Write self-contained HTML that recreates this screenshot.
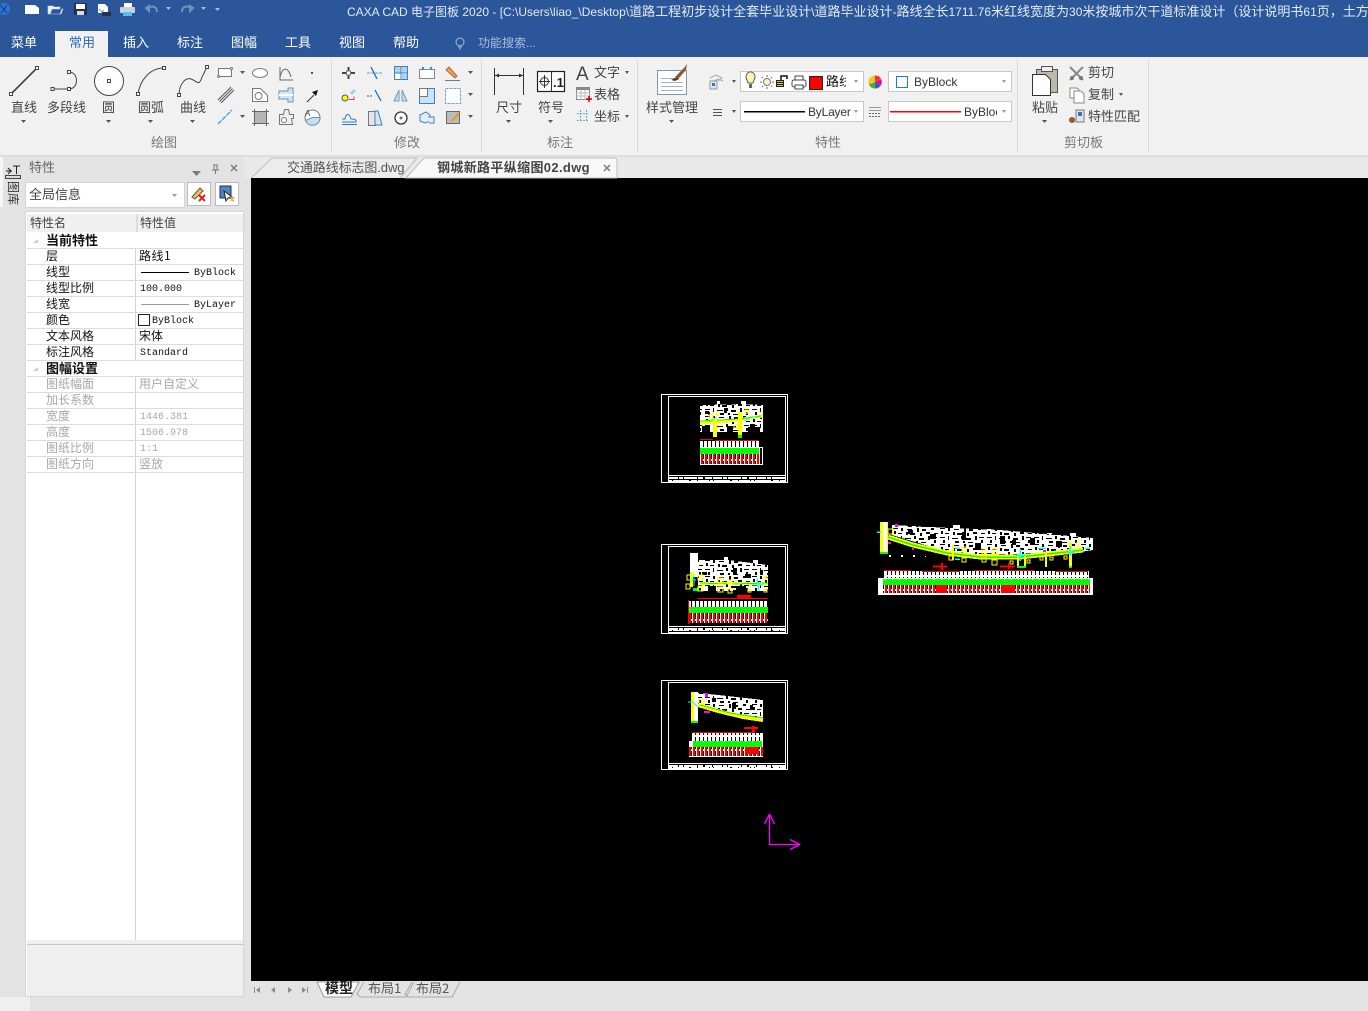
<!DOCTYPE html>
<html><head><meta charset="utf-8"><style>
html,body{margin:0;padding:0;width:1368px;height:1011px;overflow:hidden;background:#e3e3e3}
.a,.t,.g,.v{position:absolute;white-space:nowrap}
.t{font:13px/16px "Liberation Sans","Noto Sans CJK SC",sans-serif;color:#444}
.tab{color:#fff;top:35px}
.gl{color:#777;top:135px}
.g{font:12px/16px "WenQuanYi Zen Hei","Noto Sans CJK SC",sans-serif;color:#111}
.v{font:10px/16px "Liberation Mono","WenQuanYi Zen Hei",monospace;color:#111}
.d{color:#a8a8a8}
.ln{position:absolute;left:27px;width:216px;height:1px;background:#dcdcdc}
svg{position:absolute;left:0;top:0}
i{font-style:normal;font-size:13px}
</style></head><body>
<div class="a" style="left:0;top:0;width:1368px;height:57px;background:#2b579a"></div>
<div class="a" style="left:0;top:57px;width:1368px;height:98px;background:#f1f1f1"></div>
<div class="a" style="left:0;top:155px;width:1368px;height:2px;background:#dedede"></div>
<div class="a" style="left:55px;top:31px;width:53px;height:26px;background:#f1f1f1"></div>
<div class="a" style="left:331px;top:60px;width:1px;height:92px;background:#d8d8d8"></div>
<div class="a" style="left:481px;top:60px;width:1px;height:92px;background:#d8d8d8"></div>
<div class="a" style="left:637px;top:60px;width:1px;height:92px;background:#d8d8d8"></div>
<div class="a" style="left:1017px;top:60px;width:1px;height:92px;background:#d8d8d8"></div>
<div class="a" style="left:1148px;top:60px;width:1px;height:92px;background:#d8d8d8"></div>

<div class="a" style="left:347px;top:3px;width:1021px;overflow:hidden;font:12px/17px 'Liberation Sans','Noto Sans CJK SC',sans-serif;color:#e4eaf4">CAXA CAD 电子图板 2020 - [C:\Users\liao_\Desktop\<i>道路工程初步设计全套毕业设计</i>\<i>道路毕业设计</i>-<i>路线全长</i>1711.76<i>米红线宽度为</i>30<i>米按城市次干道标准设计（设计说明书</i>61<i>页，土方计算表</i></div>

<div class="t tab" style="left:11px">菜单</div>
<div class="t tab" style="left:69px;color:#2b6cb5">常用</div>
<div class="t tab" style="left:123px">插入</div>
<div class="t tab" style="left:177px">标注</div>
<div class="t tab" style="left:231px">图幅</div>
<div class="t tab" style="left:285px">工具</div>
<div class="t tab" style="left:339px">视图</div>
<div class="t tab" style="left:393px">帮助</div>
<div class="t tab" style="left:478px;font-size:12px;color:#a9bbd8">功能搜索...</div>

<div class="t" style="left:11px;top:100px">直线</div>
<div class="t" style="left:47px;top:100px">多段线</div>
<div class="t" style="left:102px;top:100px">圆</div>
<div class="t" style="left:138px;top:100px">圆弧</div>
<div class="t" style="left:180px;top:100px">曲线</div>
<div class="t" style="left:496px;top:100px">尺寸</div>
<div class="t" style="left:538px;top:100px">符号</div>
<div class="t" style="left:594px;top:65px">文字</div>
<div class="t" style="left:594px;top:87px">表格</div>
<div class="t" style="left:594px;top:109px">坐标</div>
<div class="t" style="left:646px;top:100px">样式管理</div>
<div class="t" style="left:1032px;top:100px">粘贴</div>
<div class="t" style="left:1088px;top:65px">剪切</div>
<div class="t" style="left:1088px;top:87px">复制</div>
<div class="t" style="left:1088px;top:109px">特性匹配</div>
<div class="t gl" style="left:151px">绘图</div>
<div class="t gl" style="left:394px">修改</div>
<div class="t gl" style="left:547px">标注</div>
<div class="t gl" style="left:815px">特性</div>
<div class="t gl" style="left:1064px">剪切板</div>

<div class="a" style="left:740px;top:71px;width:122px;height:19px;background:#fff;border:1px solid #c8c8c8"></div>
<div class="a" style="left:888px;top:71px;width:122px;height:19px;background:#fff;border:1px solid #c8c8c8"></div>
<div class="a" style="left:740px;top:101px;width:122px;height:19px;background:#fff;border:1px solid #c8c8c8"></div>
<div class="a" style="left:888px;top:101px;width:122px;height:19px;background:#fff;border:1px solid #c8c8c8"></div>
<div class="t" style="left:826px;top:74px;width:20px;overflow:hidden;color:#111">路线</div>
<div class="t" style="left:914px;top:74px;font-size:12px;color:#333">ByBlock</div>
<div class="t" style="left:808px;top:104px;font-size:12px;color:#333;letter-spacing:-.2px">ByLayer</div>
<div class="t" style="left:964px;top:104px;font-size:12px;color:#333;width:33px;overflow:hidden">ByBlock</div>

<!-- document tabs -->
<div class="a" style="left:244px;top:157px;width:1124px;height:21px;background:#e9e9e9"></div>
<div class="a" style="left:251px;top:178px;width:1117px;height:803px;background:#000"></div>
<div class="t" style="left:287px;top:160px;color:#555;z-index:3;letter-spacing:-.1px">交通路线标志图.dwg</div>
<div class="t" style="left:437px;top:160px;font-weight:bold;color:#444;z-index:3;letter-spacing:.35px">钢城新路平纵缩图02.dwg</div>

<!-- left strip + panel -->
<div class="a" style="left:0;top:157px;width:3px;height:50px;background:#f6f6f6"></div>
<div class="a" style="left:6px;top:181px;font:12px/13px 'WenQuanYi Zen Hei',sans-serif;color:#333;writing-mode:vertical-rl;text-orientation:sideways">图库</div>
<div class="t" style="left:29px;top:160px;color:#666">特性</div>
<div class="a" style="left:25px;top:182px;width:158px;height:24px;background:#fff;border:1px solid #d4d4d4"></div>
<div class="t" style="left:29px;top:187px;color:#444">全局信息</div>
<div class="a" style="left:187px;top:182px;width:22px;height:22px;background:#fff;border:1px solid #bbb"></div>
<div class="a" style="left:215px;top:182px;width:22px;height:22px;background:#fff;border:1px solid #bbb"></div>

<div class="a" style="left:25px;top:211px;width:219px;height:786px;background:#fff;box-sizing:border-box;border:1px solid #d6d6d6"></div>
<div class="a" style="left:27px;top:214px;width:216px;height:18px;background:#f0f0f0"></div>
<div class="a" style="left:136px;top:214px;width:2px;height:18px;background:#dcdcdc"></div>
<div class="a" style="left:135px;top:232px;width:1px;height:708px;background:#d2d2d2"></div>
<div class="a" style="left:27px;top:232px;width:216px;height:17px;background:#fff"></div>
<div class="a" style="left:27px;top:360px;width:216px;height:16px;background:#fff"></div>
<div class="a" style="left:27px;top:940px;width:216px;height:56px;background:#efefef;border-top:0"></div>
<div class="a" style="left:27px;top:944px;width:216px;height:1px;background:#c6c6c6"></div>
<div class="ln" style="top:248px"></div><div class="ln" style="top:264px"></div><div class="ln" style="top:280px"></div><div class="ln" style="top:296px"></div><div class="ln" style="top:312px"></div><div class="ln" style="top:328px"></div><div class="ln" style="top:344px"></div><div class="ln" style="top:360px"></div><div class="ln" style="top:376px"></div><div class="ln" style="top:392px"></div><div class="ln" style="top:408px"></div><div class="ln" style="top:424px"></div><div class="ln" style="top:440px"></div><div class="ln" style="top:456px"></div><div class="ln" style="top:472px"></div>

<div class="g" style="left:30px;top:215px;color:#444">特性名</div>
<div class="g" style="left:140px;top:215px;color:#444">特性值</div>
<div class="g" style="left:46px;top:232px;font-size:13px;font-weight:bold">当前特性</div>
<div class="g" style="left:46px;top:360px;font-size:13px;font-weight:bold">图幅设置</div>
<div class="g" style="left:46px;top:248px">层</div><div class="g" style="left:139px;top:248px;letter-spacing:.5px">路线1</div>
<div class="g" style="left:46px;top:264px">线型</div><div class="v" style="left:194px;top:266px">ByBlock</div>
<div class="g" style="left:46px;top:280px">线型比例</div><div class="v" style="left:140px;top:282px">100.000</div>
<div class="g" style="left:46px;top:296px">线宽</div><div class="v" style="left:194px;top:298px">ByLayer</div>
<div class="g" style="left:46px;top:312px">颜色</div><div class="v" style="left:152px;top:314px">ByBlock</div>
<div class="g" style="left:46px;top:328px">文本风格</div><div class="g" style="left:139px;top:328px">宋体</div>
<div class="g" style="left:46px;top:344px">标注风格</div><div class="v" style="left:140px;top:346px">Standard</div>
<div class="g d" style="left:46px;top:376px">图纸幅面</div><div class="g d" style="left:139px;top:376px">用户自定义</div>
<div class="g d" style="left:46px;top:392px">加长系数</div>
<div class="g d" style="left:46px;top:408px">宽度</div><div class="v d" style="left:140px;top:410px">1446.381</div>
<div class="g d" style="left:46px;top:424px">高度</div><div class="v d" style="left:140px;top:426px">1506.978</div>
<div class="g d" style="left:46px;top:440px">图纸比例</div><div class="v d" style="left:140px;top:442px">1:1</div>
<div class="g d" style="left:46px;top:456px">图纸方向</div><div class="g d" style="left:139px;top:456px">竖放</div>

<!-- bottom -->
<div class="a" style="left:0;top:997px;width:30px;height:14px;background:#efefef"></div>
<div class="g" style="left:325px;top:980px;font-size:14px;font-weight:bold;z-index:3;color:#222">模型</div>
<div class="g" style="left:368px;top:980px;font-size:13px;z-index:3;color:#555">布局1</div>
<div class="g" style="left:416px;top:980px;font-size:13px;z-index:3;color:#555">布局2</div>

<svg width="1368" height="1011" viewBox="0 0 1368 1011" fill="none" style="z-index:2">
<defs>
<pattern id="n" width="47" height="16" patternUnits="userSpaceOnUse">
<rect width="47" height="16" fill="#fff"/>
<g fill="#000"><rect x="0" y="0" width="5" height="1"/><rect x="8" y="0" width="2" height="3"/><rect x="14" y="1" width="5" height="1"/><rect x="24" y="0" width="2" height="4"/><rect x="29" y="1" width="4" height="2"/><rect x="38" y="0" width="3" height="2"/><rect x="1" y="3" width="2" height="3"/><rect x="5" y="5" width="4" height="1"/><rect x="13" y="4" width="2" height="3"/><rect x="17" y="5" width="5" height="2"/><rect x="27" y="5" width="2" height="3"/><rect x="33" y="4" width="4" height="2"/><rect x="41" y="5" width="4" height="1"/><rect x="0" y="9" width="5" height="1"/><rect x="8" y="8" width="1" height="4"/><rect x="12" y="10" width="6" height="1"/><rect x="21" y="8" width="2" height="3"/><rect x="26" y="10" width="5" height="2"/><rect x="35" y="8" width="2" height="4"/><rect x="39" y="9" width="5" height="1"/><rect x="3" y="12" width="2" height="3"/><rect x="15" y="13" width="4" height="2"/><rect x="23" y="13" width="2" height="2"/><rect x="28" y="14" width="5" height="1"/><rect x="41" y="12" width="2" height="3"/></g>
</pattern>
<pattern id="col" width="4" height="8" patternUnits="userSpaceOnUse"><rect width="3" height="8" fill="#fff"/><rect width="4" height="1" fill="#fff"/><rect y="7" width="4" height="1" fill="#fff"/></pattern>
<pattern id="red" width="4" height="10" patternUnits="userSpaceOnUse"><rect width="4" height="10" fill="#fff"/><rect x="1" width="2" height="10" fill="#f00"/><rect x="3" y="1" width="1" height="8" fill="#000"/></pattern>
<pattern id="grn" width="7" height="6" patternUnits="userSpaceOnUse"><rect width="7" height="6" fill="#0f0"/><rect x="3" y="3" width="1" height="1" fill="#cfc"/></pattern>
</defs>

<!-- QAT -->
<path d="M25 5h10l4 3v6H25z" fill="#fff"/>
<path d="M48 13V6h5l1 1h6v2h-8l-2 5h10l2-5h1l-2 5H48z" fill="#eee" stroke="#cfd6e2" stroke-width=".6"/>
<rect x="74" y="3" width="13" height="12" rx="1" fill="#20324d"/><rect x="76" y="4" width="9" height="5" fill="#fff"/><rect x="77" y="11" width="7" height="4" fill="#ddd"/>
<path d="M98 4h7l3 3v6H98z" fill="#fff"/><path d="M102 12h9v4h-9z" fill="#20324d"/><path d="M99 9l3 3 2-2" stroke="#5ba3e0"/>
<path d="M124 3h8v4h-8z" fill="#fff"/><rect x="120" y="7" width="15" height="6" rx="1" fill="#c9d3df"/><rect x="123" y="12" width="9" height="4" fill="#52c2e6"/>
<path d="M148 9c3-4 9-3 9 3M146 8l3-2v5z" stroke="#7290bd" stroke-width="2"/>
<path d="M191 9c-3-4-9-3-9 3M193 8l-3-2v5z" stroke="#7290bd" stroke-width="2"/>
<path d="M166 7h5l-2.500 3zM201 7h5l-2.500 3zM215 6h5M215 8h5l-2.500 3z" fill="#a9bbd8" stroke="none"/>
<circle cx="4" cy="9" r="6" fill="#2f74d0"/><path d="M0 5l7 8M7 5l-6 8" stroke="#0e3d8a"/>
<circle cx="460" cy="42" r="4" stroke="#a9bbd8"/><path d="M458 47h4M459 49h2" stroke="#a9bbd8"/>

<!-- draw big icons -->
<g stroke="#444" stroke-width="1">
<path d="M11 94L37 68" stroke-width="1.600"/><rect x="9.500" y="92.500" width="3" height="3" fill="#fff"/><rect x="35.500" y="66.500" width="3" height="3" fill="#fff"/>
<path d="M52 89h17M69 72c10 0 10 17 0 17"/><rect x="51" y="87.500" width="3" height="3" fill="#fff"/><rect x="67.500" y="87.500" width="3" height="3" fill="#fff"/><rect x="67.500" y="70.500" width="3" height="3" fill="#fff"/>
<circle cx="109" cy="81" r="14.500" fill="#fff"/><rect x="107.500" y="79.500" width="3" height="3" fill="#fff"/>
<path d="M138 94c2-14 12-26 26-26"/><rect x="136.500" y="92.500" width="3" height="3" fill="#fff"/><rect x="162.500" y="66.500" width="3" height="3" fill="#fff"/>
<path d="M179 95c0-10 6-18 12-16s8 8 11-2l5-10"/><rect x="177.500" y="93.500" width="3" height="3" fill="#fff"/><rect x="205.500" y="65.500" width="3" height="3" fill="#fff"/>
</g>
<!-- drop arrows -->
<g fill="#555"><path d="M21 120h5l-2.500 3zM106 120h5l-2.500 3zM148 120h5l-2.500 3zM190 120h5l-2.500 3zM240 71h5l-2.500 3zM240 115h5l-2.500 3zM468 71h5l-2.500 3zM468 93h5l-2.500 3zM468 115h5l-2.500 3zM506 120h5l-2.500 3zM548 120h5l-2.500 3zM625 71h4l-2 3zM625 115h4l-2 3zM1119 93h4l-2 3zM669 120h5l-2.500 3zM732 80h4l-2 3zM732 110h4l-2 3zM1042 120h5l-2.500 3z"/></g>
<g fill="#999"><path d="M854 80h4l-2 3zM1002 80h4l-2 3zM854 110h4l-2 3zM1002 110h4l-2 3zM172 194h5l-2.500 3z"/></g>

<!-- draw small icons -->
<g stroke="#777" stroke-width="1">
<rect x="218.500" y="68.500" width="13" height="8" fill="#fff"/><circle cx="218.500" cy="76.500" r="1" fill="#fff"/><circle cx="231.500" cy="68.500" r="1" fill="#fff"/>
<ellipse cx="260" cy="73" rx="7.500" ry="4.500" fill="#fff"/>
<path d="M280 67v13h13M280 77c3-11 8-10 11 0" stroke="#666"/>
<rect x="311" y="72" width="2" height="2" fill="#555" stroke="none"/>
<path d="M218 100l13-13M219.500 101.500l13-13M221 103l13-13" stroke="#555"/>
<path d="M252.500 88.500h8l7 7v6h-15z" fill="#fff"/><circle cx="258.500" cy="96" r="3.500"/>
<path d="M279 91h9v-3h5v14h-5v-3h-9z" fill="#cfe6fa" stroke="#6f8fb0"/><path d="M279 95h14" stroke="#fff" stroke-width="2"/>
<path d="M307 102l7-7" stroke="#333"/><path d="M312 92l6-2-2 6z" fill="#111" stroke="none"/>
<path d="M218 124l14-14" stroke="#3b9ee6" stroke-dasharray="5 1" stroke-width="1.300"/>
<rect x="254.500" y="111.500" width="12" height="12" fill="#b5b5b5"/><path d="M252 111.500h17M252 123.500h17M254.500 109v17M266.500 109v17" stroke="#666"/>
<path d="M279.500 114.500h4l1-5h4l1 5h4v4h-2l1 6h-13z" fill="#eee"/><circle cx="284" cy="120" r="2.500" fill="#fff"/>
<circle cx="312.500" cy="117.500" r="7.500" fill="#fff"/><path d="M312.500 117.500h7.500a7.500 7.500 0 0 1-14.500 3z" fill="#bfe2f7" stroke="#6f8fb0"/>
</g>
<text x="305" y="116" font-family="Liberation Sans" font-size="8" fill="#444">A</text>
<!-- modify icons -->
<g stroke="#4a7fb0" stroke-width="1">
<path d="M342 73h4M351 73h4M348.500 67v4M348.500 75v4" stroke="#444" stroke-width="2"/><rect x="346.500" y="71" width="4" height="4" fill="#fff" stroke="#777"/>
<path d="M367 73h16" stroke-dasharray="3 1" stroke="#5ba3e0"/><path d="M371 67l6 12" stroke="#1d6fb8" stroke-width="1.300"/>
<rect x="394.500" y="66.500" width="13" height="13" fill="#fff"/><rect x="395" y="67" width="6" height="6" fill="#a9d3f5" stroke="none"/><rect x="402" y="67" width="5" height="6" fill="#a9d3f5" stroke="none"/><rect x="402" y="74" width="5" height="5" fill="#a9d3f5" stroke="none"/><path d="M394 73h14M401 66v14"/>
<rect x="419.500" y="69.500" width="15" height="9" fill="#fff" stroke="#888"/><path d="M423 67v3M431 67v3" stroke="#3b8fdc" stroke-width="2"/>
<path d="M446 70l9 8 2-2-8-9z" fill="#f5a623" stroke="#a66"/><path d="M445 80.500h15" stroke="#777"/>
<circle cx="345" cy="98" r="3" fill="#ff0" stroke="#555"/><path d="M351 94l4-4" stroke="#bfe2f7" stroke-width="4"/><path d="M351 94l4-4" stroke="#7aa8d0" stroke-width=".6"/><path d="M349 99.500h5v-3" stroke="#c44"/>
<path d="M367 96h6" stroke-dasharray="2 1" stroke="#555"/><path d="M375 90l6 11" stroke="#1d6fb8" stroke-width="1.300"/>
<path d="M399 90v11h-5zM402 90v11h5z" fill="#bfdff5" stroke="#7a9ab5"/>
<rect x="419.500" y="88.500" width="15" height="15" fill="#c6e4fa"/><rect x="419.500" y="88.500" width="8" height="8" fill="#fff" stroke="#777"/>
<rect x="445.500" y="88.500" width="15" height="15" fill="#fff" stroke="#6fa3d0" stroke-dasharray="3 1"/>
<path d="M342 122h14c1-3-3-3-5-3-2-6-5-6-6 0h-3M342 124.500h15" stroke="#2c7cc4"/>
<path d="M368.500 111.500h7v14h-7z" fill="#e5e5e5" stroke="#777"/><path d="M375 111h3l4 14h-7z" fill="#cfe8fb"/>
<circle cx="401" cy="118" r="6" stroke="#333" stroke-width="1.300" fill="#fff"/><circle cx="401" cy="118" r="1" fill="#444"/>
<path d="M420 115l6-3 4 3v6l-5 2-5-2z" fill="#dff0fc"/><path d="M428 117h6v6h-5" fill="#dff0fc"/>
<rect x="446.500" y="111.500" width="13" height="12" fill="#bbb" stroke="#666"/><path d="M452 121l7-8" stroke="#e89a1e" stroke-width="2"/>
</g>
<!-- dim -->
<g stroke="#333">
<path d="M494.500 68v27M523.500 68v27"/><path d="M495 75.500h28"/><path d="M495 75.500l4-2v4zM523 75.500l-4-2v4z" fill="#333" stroke="none"/>
<rect x="537.500" y="71.500" width="27" height="20" fill="#fff" stroke="#222" stroke-width="1.200"/><path d="M551.500 72v19"/><circle cx="544.500" cy="81.500" r="4"/><path d="M539 81.500h11M544.500 75v13"/>
</g>
<text x="553" y="87" font-family="Liberation Sans" font-size="13" font-weight="bold" fill="#222">.1</text>
<text x="576" y="80" font-family="Liberation Sans" font-size="19" fill="#444">A</text>
<rect x="576.500" y="87.500" width="13" height="12" fill="#fff" stroke="#888"/><rect x="576" y="87" width="14" height="3" fill="#888"/><path d="M576 93h14M576 96h14M581 90v10M585 90v10" stroke="#bbb"/><path d="M586 99h6M589 96v6" stroke="#c00" stroke-width="1.500"/>
<path d="M577 113.500h12M577 120.500h12M580.500 110v12M586.500 110v12" stroke="#6fa3d0" stroke-dasharray="2 1"/>
<!-- style -->
<rect x="657.500" y="70.500" width="29" height="24" fill="#fff" stroke="#7d97b5"/><path d="M661 78.500h18M661 82.500h22M661 86.500h22M661 90.500h22" stroke="#9db4cc"/><path d="M675 77l9-9 3-4-1 6-7 8z" fill="#8b5a2b"/><path d="M671 80l6-3 2 2-4 2z" fill="#5d3a1a"/>
<path d="M710 78l6-3 6 3-4 3M712 82l6-3 5 2" stroke="#aaa"/><rect x="710" y="81" width="7" height="8" fill="#dfe6ef" stroke="#999"/><rect x="712" y="83" width="3" height="3" fill="#3b70c0"/>
<path d="M713 109.500h9M713 112.500h9M713 115.500h9" stroke="#555"/>
<!-- layer combo -->
<path d="M747 80a4.500 5 0 1 1 7 0l-1 3h-5z" fill="#fff3b0" stroke="#555"/><rect x="749" y="84" width="3" height="4" fill="#666"/>
<circle cx="767" cy="82" r="3.500" stroke="#777" fill="#fff6c5"/><path d="M767 75v2M767 87v2M760 82h2M772 82h2M762 77l1 1M771 86l1 1M772 77l-1 1M763 86l-1 1" stroke="#666"/>
<rect x="776" y="80" width="8" height="7" fill="#222"/><path d="M777 81.500h6M777 83.500h6M777 85.500h6" stroke="#d6c43a"/><path d="M781 80v-4h6v3" stroke="#111" stroke-width="1.500"/>
<rect x="792" y="80" width="14" height="7" rx="2" fill="#fff" stroke="#444"/><rect x="795" y="76" width="8" height="4" fill="#fff" stroke="#444"/><rect x="795" y="85" width="8" height="4" fill="#fff" stroke="#444"/>
<rect x="809.500" y="76.500" width="13" height="13" fill="#f00" stroke="#222"/>
<circle cx="875" cy="82" r="6.500" fill="#f3c623"/><path d="M875 82V75.500a6.500 6.500 0 0 1 6 3z" fill="#e33"/><path d="M875 82l6-3a6.500 6.500 0 0 1 0 6z" fill="#e0a"/><path d="M875 82l6 3a6.500 6.500 0 0 1-6 3.500z" fill="#45c"/><path d="M875 82v6.500a6.500 6.500 0 0 1-6-4z" fill="#3b3"/>
<rect x="896.500" y="76.500" width="11" height="11" fill="#fff" stroke="#1f7bd1"/>
<rect x="744" y="111" width="61" height="1.500" fill="#000"/>
<rect x="890" y="111" width="71" height="1.500" fill="#f00"/>
<path d="M869 107.500h12M869 110.500h12" stroke="#999"/><path d="M869 113.500h12M869 116.500h12" stroke="#666" stroke-dasharray="2 1"/>
<!-- clipboard -->
<path d="M1036.500 69.500h21v23h-21z" fill="#bdb7ac" stroke="#555"/><rect x="1041.500" y="66.500" width="11" height="5" fill="#eee" stroke="#555"/><path d="M1032.500 74.500h13l5 5v16h-18z" fill="#fff" stroke="#333"/>
<path d="M1070 67l13 13M1083 67l-13 13" stroke="#888" stroke-width="2"/><circle cx="1072" cy="78" r="2" fill="#777"/><circle cx="1081" cy="78" r="2" fill="#777"/>
<path d="M1070 88h7l2 2v8h-9z" fill="#fff" stroke="#888"/><path d="M1074 91h7l3 3v9h-10z" fill="#fff" stroke="#888"/>
<rect x="1076" y="110" width="8" height="12" fill="#dfe6ef" stroke="#777"/><rect x="1078" y="112" width="4" height="4" fill="#3b70c0"/><circle cx="1072" cy="120" r="3" fill="#8b5a2b"/>

<!-- doc tabs -->
<path d="M251 178L272 158H417L400 178" fill="#ececec" stroke="#bdbdbd"/>
<path d="M406 178L424 158H614q3 0 3 3V178z" fill="#f8f8f8" stroke="#bdbdbd"/>
<path d="M604 165l6 6M610 165l-6 6" stroke="#777" stroke-width="1.400"/>

<!-- panel icons -->
<path d="M6 171h6M8 168l3 3-3 3" stroke="#222"/><path d="M13 166h7M16.500 166v8" stroke="#222"/><rect x="5.500" y="175.500" width="15" height="3" fill="#ddd" stroke="#444"/>
<path d="M192 171h9l-4.500 5z" fill="#777"/>
<path d="M213 165h5M214 165v5h3v-5M215.500 170v4M212 170h7" stroke="#777"/>
<path d="M231 165l6 6M237 165l-6 6" stroke="#777" stroke-width="1.400"/>
<path d="M192 197l8-9 3 3-8 8z" fill="#f3c04a" stroke="#555"/><path d="M199 195l6 6M205 195l-6 6" stroke="#d22" stroke-width="2"/>
<rect x="220" y="186" width="11" height="12" fill="#4a86c8" stroke="#234"/><path d="M224 191l2 10 2-3 4-1z" fill="#fff" stroke="#222"/><path d="M230 197l4 1-3 2 3 1" stroke="#e8a01e"/>
<path d="M33 243l5-4v4z" fill="#ccc"/><path d="M33 371l5-4v4z" fill="#ccc"/>
<path d="M141 272.500h48" stroke="#000"/><path d="M141 304.500h48" stroke="#999"/><rect x="138.500" y="314.500" width="11" height="11" fill="#fff" stroke="#222"/>

<!-- bottom nav -->
<g fill="#8a8a8a"><path d="M254 987h1v6h-1zM260 987v6l-4-3zM275 987v6l-4-3zM288 987l4 3-4 3zM302 987l4 3-4 3zM307 987h1v6h-1z"/></g>
<path d="M317 982l7 15h27l8-15z" fill="#fff" stroke="#999"/>
<path d="M364 982l-7 12 3 3h46l8-15" stroke="#aaa"/>
<path d="M412 982l-7 12 3 3h44l8-15" stroke="#aaa"/>

<!-- sheets -->
<g shape-rendering="crispEdges">
<g stroke="#fff">
<rect x="661.500" y="394.500" width="126" height="88"/><rect x="668.500" y="396.500" width="117" height="85"/><path d="M668 475.500h118"/>
<rect x="661.500" y="544.500" width="126" height="89"/><rect x="668.500" y="546.500" width="117" height="86"/><path d="M668 626.500h118"/>
<rect x="661.500" y="680.500" width="126" height="89"/><rect x="668.500" y="682.500" width="117" height="86"/><path d="M668 763.500h118"/>
</g>
<g stroke="#fff" stroke-width="2" stroke-dasharray="9 1 4 1 13 1 5 2 7 1">
<path d="M669 478h116M669 629h116M669 766h116"/>
</g>
<g stroke="#fff" stroke-dasharray="3 1 16 2 6 1 11 1">
<path d="M669 480.500h116M669 630.500h116M669 767.500h116"/>
</g>

<!-- sheet 1 -->
<rect x="717" y="401" width="3" height="5" fill="#fff"/><rect x="741" y="401" width="5" height="5" fill="#fff"/>
<path d="M700 405h14l3-1 12 1 9-1 25 1v27h-63z" fill="url(#n)"/>
<g fill="#000"><rect x="705" y="411" width="4" height="3"/><rect x="724" y="408" width="3" height="5"/><rect x="750" y="424" width="5" height="3"/><rect x="727" y="426" width="6" height="6"/><rect x="702" y="426" width="8" height="6"/><rect x="748" y="427" width="12" height="5"/></g>
<path d="M700 423l30-2 33-5" stroke="#ff0" stroke-width="3"/><path d="M700 421l40-2 21-3" stroke="#0f0"/>
<rect x="713" y="418" width="4" height="19" fill="#ff0"/><rect x="738" y="412" width="4" height="26" fill="#ff0"/><rect x="738" y="435" width="4" height="3" fill="#0f0"/>
<g stroke="#ff0"><rect x="709" y="415" width="4" height="4"/><rect x="716" y="412" width="3" height="3"/><rect x="745" y="410" width="3" height="3"/><rect x="734" y="425" width="3" height="3"/></g>
<path d="M709 422l8-5M745 421l6-4M752 417h6" stroke="#0ff"/>
<rect x="700" y="441" width="59" height="7" fill="url(#col)"/><path d="M700 439.500h13M715 440.500h44" stroke="#f00"/>
<rect x="700" y="448" width="59" height="6" fill="url(#grn)"/>
<rect x="700" y="454" width="59" height="10" fill="url(#red)"/>
<path d="M759.500 447v17M759 447.500h4M762.500 447v17M700 464.500h63" stroke="#fff"/>

<!-- sheet 2 -->
<rect x="690" y="553" width="8" height="24" fill="#fff"/><rect x="724" y="557" width="4" height="26" fill="#fff"/><rect x="753" y="560" width="5" height="28" fill="#fff"/>
<path d="M698 560l26 0 4 0 40 5v26h-70z" fill="url(#n)"/>
<g fill="#000"><rect x="702" y="572" width="5" height="3"/><rect x="733" y="568" width="4" height="6"/><rect x="745" y="574" width="6" height="4"/><rect x="708" y="586" width="8" height="5"/><rect x="736" y="586" width="10" height="5"/><rect x="760" y="570" width="3" height="5"/></g>
<path d="M700 584l30-1 38 1" stroke="#ff0" stroke-width="2.500"/><path d="M700 583l34 1 34-1" stroke="#0f0"/>
<rect x="690" y="572" width="3" height="15" fill="#ff0"/><rect x="693" y="588" width="6" height="3" fill="#0f0"/>
<g stroke="#ff0" stroke-width="1.200"><rect x="687" y="575" width="4" height="5"/><rect x="698" y="575" width="5" height="5"/><rect x="686" y="584" width="4" height="5"/><rect x="698" y="586" width="5" height="5"/><rect x="718" y="578" width="5" height="5"/><rect x="718" y="587" width="5" height="5"/><rect x="728" y="580" width="4" height="4"/><rect x="728" y="589" width="4" height="4"/><rect x="748" y="589" width="3" height="3"/><rect x="764" y="576" width="3" height="3"/><rect x="764" y="589" width="3" height="3"/></g>
<path d="M752 585h11M757 578l2 13M690 580h6M694 574v12" stroke="#0ff" stroke-width="1.300"/>
<rect x="689" y="601" width="79" height="6" fill="url(#col)"/><path d="M697 598.500h71" stroke="#f00"/><rect x="737" y="595" width="14" height="3" fill="#f00"/>
<rect x="689" y="607" width="79" height="6" fill="url(#grn)"/>
<rect x="689" y="613" width="79" height="10" fill="url(#red)"/>
<path d="M688.500 600v24" stroke="#f00"/>

<!-- sheet 3 -->
<rect x="693" y="692" width="5" height="30" fill="#fff"/>
<path d="M698 693l20 2 45 5v18l-30-3-35-12z" fill="url(#n)"/>
<g fill="#000"><rect x="712" y="698" width="4" height="4"/><rect x="732" y="703" width="4" height="6"/><rect x="750" y="705" width="3" height="5"/></g>
<path d="M698 705l20 6 25 6 20 3" stroke="#ff0" stroke-width="4"/><path d="M700 705l30 8 33 5" stroke="#0f0"/>
<rect x="691" y="692" width="3" height="30" fill="#ff0"/><rect x="691" y="721" width="7" height="2" fill="#0f0"/>
<rect x="705" y="693" width="3" height="4" fill="#f0f"/><rect x="699" y="699" width="5" height="5" stroke="#ff0"/><rect x="704" y="711" width="6" height="2" fill="#f0f"/><path d="M688 702h5l5 5" stroke="#0ff"/>
<path d="M744 727h14v2h-14z" fill="#f00"/><rect x="752" y="726" width="3" height="7" fill="#f00"/>
<rect x="692" y="733" width="71" height="8" fill="url(#col)"/><path d="M693 732.500h60" stroke="#f00"/>
<rect x="689" y="741" width="74" height="6" fill="#fff"/><rect x="693" y="741" width="69" height="6" fill="url(#grn)"/>
<rect x="689" y="747" width="74" height="10" fill="url(#red)"/><rect x="747" y="747" width="10" height="7" fill="#f00"/>
<path d="M689 756.500h74" stroke="#fff"/>

<!-- big drawing -->
<rect x="953" y="525" width="7" height="28" fill="#fff"/><rect x="987" y="529" width="4" height="24" fill="#fff"/><rect x="1017" y="533" width="7" height="24" fill="#fff"/><rect x="1047" y="533" width="5" height="18" fill="#fff"/><rect x="1070" y="533" width="6" height="18" fill="#fff"/>
<path d="M892 525L950 528L1000 530L1093 538V550L1080 552L1000 555L970 555L935 548L892 535z" fill="url(#n)"/>
<g fill="#000"><rect x="908" y="530" width="5" height="4"/><rect x="930" y="534" width="6" height="5"/><rect x="962" y="532" width="4" height="8"/><rect x="1000" y="536" width="5" height="8"/><rect x="1012" y="540" width="4" height="5"/><rect x="1030" y="538" width="5" height="7"/><rect x="1056" y="541" width="6" height="6"/><rect x="975" y="543" width="6" height="7"/></g>
<rect x="883" y="522" width="4" height="31" fill="#fff"/><rect x="880" y="522" width="3" height="31" fill="#ff0"/><rect x="887" y="522" width="1" height="31" fill="#ff0"/><rect x="880" y="552" width="8" height="2" fill="#0f0"/>
<path d="M888 537l25 8 34 8 33 4 40 0 37-4 26-3" stroke="#ff0" stroke-width="5"/><path d="M888 537l25 8 34 8 33 4 40 0 37-4 26-3" stroke="#0f0" stroke-width="1.500"/>
<rect x="952" y="545" width="2" height="15" fill="#ff0"/><rect x="1017" y="553" width="2" height="14" fill="#ff0"/><rect x="1024" y="553" width="2" height="14" fill="#ff0"/><rect x="1017" y="566" width="9" height="2" fill="#0f0"/><rect x="1045" y="553" width="2" height="14" fill="#ff0"/><rect x="1069" y="542" width="3" height="26" fill="#ff0"/><rect x="1069" y="566" width="3" height="2" fill="#0f0"/>
<g stroke="#ff0" stroke-width="1.200"><rect x="888" y="529" width="5" height="5"/><rect x="949" y="556" width="4" height="4"/><rect x="962" y="558" width="4" height="4"/><rect x="962" y="547" width="4" height="4"/><rect x="982" y="558" width="4" height="4"/><rect x="982" y="550" width="4" height="4"/><rect x="992" y="560" width="5" height="5"/><rect x="992" y="549" width="5" height="5"/><rect x="1010" y="561" width="3" height="3"/><rect x="1027" y="560" width="3" height="3"/><rect x="1040" y="557" width="3" height="3"/><rect x="1050" y="557" width="3" height="3"/><rect x="1064" y="556" width="3" height="3"/><rect x="1076" y="543" width="3" height="3"/></g>
<path d="M877 532h4M955 548h5M955 559h5M1016 555h12M1020 549v12M1038 548h8M1066 552h8M1070 546v10M1085 548h5" stroke="#0ff" stroke-width="1.500"/>
<rect x="895" y="524" width="3" height="3" fill="#f0f"/><rect x="888" y="542" width="3" height="2" fill="#f0f"/><rect x="912" y="548" width="2" height="2" fill="#f0f"/><rect x="1043" y="550" width="3" height="2" fill="#f0f"/>
<g fill="#fff"><rect x="889" y="555" width="2" height="2"/><rect x="901" y="555" width="2" height="2"/><rect x="913" y="555" width="2" height="2"/><rect x="925" y="556" width="1" height="1"/></g>
<rect x="884" y="571" width="205" height="7" fill="url(#col)"/>
<path d="M884 570.500h27M922 571.500h38M974 570.500h60M1055 571.500h33" stroke="#f00"/>
<path d="M933 566.500h14M1000 566.500h15M942 563v7M1009 563v6" stroke="#f00" stroke-width="2"/>
<rect x="878" y="578" width="215" height="17" fill="#fff"/>
<rect x="883" y="579" width="207" height="6" fill="url(#grn)"/>
<rect x="883" y="585" width="207" height="8" fill="url(#red)"/>
<rect x="936" y="585" width="11" height="8" fill="#f00"/><rect x="1001" y="585" width="12" height="8" fill="#f00"/>
</g>
<!-- axis -->
<g stroke="#f0f" stroke-width="1.300">
<path d="M769.500 814v30.500H800M769.500 814l-5 10M769.500 814l5 10M800 844.500l-10-5M800 844.500l-10 5"/>
</g>
</svg>
</body></html>
